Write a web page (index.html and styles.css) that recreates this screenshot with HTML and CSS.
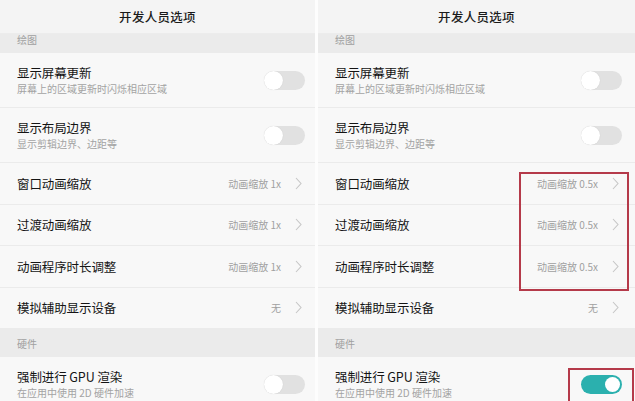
FILE: index.html
```html
<!DOCTYPE html>
<html lang="zh">
<head>
<meta charset="utf-8">
<title>开发人员选项</title>
<link rel="stylesheet" href="styles.css">
</head>
<body>
<div class="screen">
  <section class="panel panel--left">
    <header class="header">开发人员选项</header>
    <div class="section section--top">绘图</div>
    <div class="row row--double">
      <div class="text"><div class="title">显示屏幕更新</div><div class="sub">屏幕上的区域更新时闪烁相应区域</div></div>
      <span class="toggle"><span class="knob"></span></span>
    </div>
    <div class="row row--double">
      <div class="text"><div class="title">显示布局边界</div><div class="sub">显示剪辑边界、边距等</div></div>
      <span class="toggle"><span class="knob"></span></span>
    </div>
    <div class="row">
      <div class="title">窗口动画缩放</div>
      <span class="value">动画缩放 1x</span>
      <svg class="chev" width="7" height="13" viewBox="0 0 7 13"><polyline points="1,1 6,6.5 1,12" fill="none" stroke="#c6c6c6" stroke-width="1.1"/></svg>
    </div>
    <div class="row">
      <div class="title">过渡动画缩放</div>
      <span class="value">动画缩放 1x</span>
      <svg class="chev" width="7" height="13" viewBox="0 0 7 13"><polyline points="1,1 6,6.5 1,12" fill="none" stroke="#c6c6c6" stroke-width="1.1"/></svg>
    </div>
    <div class="row">
      <div class="title">动画程序时长调整</div>
      <span class="value">动画缩放 1x</span>
      <svg class="chev" width="7" height="13" viewBox="0 0 7 13"><polyline points="1,1 6,6.5 1,12" fill="none" stroke="#c6c6c6" stroke-width="1.1"/></svg>
    </div>
    <div class="row">
      <div class="title">模拟辅助显示设备</div>
      <span class="value">无</span>
      <svg class="chev" width="7" height="13" viewBox="0 0 7 13"><polyline points="1,1 6,6.5 1,12" fill="none" stroke="#c6c6c6" stroke-width="1.1"/></svg>
    </div>
    <div class="section">硬件</div>
    <div class="row row--double">
      <div class="text"><div class="title">强制进行 GPU 渲染</div><div class="sub">在应用中使用 2D 硬件加速</div></div>
      <span class="toggle"><span class="knob"></span></span>
    </div>
  </section>
  <div class="divider"></div>
  <section class="panel panel--right">
    <header class="header">开发人员选项</header>
    <div class="section section--top">绘图</div>
    <div class="row row--double">
      <div class="text"><div class="title">显示屏幕更新</div><div class="sub">屏幕上的区域更新时闪烁相应区域</div></div>
      <span class="toggle"><span class="knob"></span></span>
    </div>
    <div class="row row--double">
      <div class="text"><div class="title">显示布局边界</div><div class="sub">显示剪辑边界、边距等</div></div>
      <span class="toggle"><span class="knob"></span></span>
    </div>
    <div class="row">
      <div class="title">窗口动画缩放</div>
      <span class="value">动画缩放 0.5x</span>
      <svg class="chev" width="7" height="13" viewBox="0 0 7 13"><polyline points="1,1 6,6.5 1,12" fill="none" stroke="#c6c6c6" stroke-width="1.1"/></svg>
    </div>
    <div class="row">
      <div class="title">过渡动画缩放</div>
      <span class="value">动画缩放 0.5x</span>
      <svg class="chev" width="7" height="13" viewBox="0 0 7 13"><polyline points="1,1 6,6.5 1,12" fill="none" stroke="#c6c6c6" stroke-width="1.1"/></svg>
    </div>
    <div class="row">
      <div class="title">动画程序时长调整</div>
      <span class="value">动画缩放 0.5x</span>
      <svg class="chev" width="7" height="13" viewBox="0 0 7 13"><polyline points="1,1 6,6.5 1,12" fill="none" stroke="#c6c6c6" stroke-width="1.1"/></svg>
    </div>
    <div class="row">
      <div class="title">模拟辅助显示设备</div>
      <span class="value">无</span>
      <svg class="chev" width="7" height="13" viewBox="0 0 7 13"><polyline points="1,1 6,6.5 1,12" fill="none" stroke="#c6c6c6" stroke-width="1.1"/></svg>
    </div>
    <div class="section">硬件</div>
    <div class="row row--double">
      <div class="text"><div class="title">强制进行 GPU 渲染</div><div class="sub">在应用中使用 2D 硬件加速</div></div>
      <span class="toggle toggle--on"><span class="knob"></span></span>
    </div>
    <div class="mark mark--values"></div>
    <div class="mark mark--toggle"></div>
  </section>
</div>
</body>
</html>
```
FILE: styles.css
```css
* { box-sizing: border-box; }
html, body {
  margin: 0;
  padding: 0;
  width: 635px;
  height: 401px;
  overflow: hidden;
  background: #f7f7f7;
  font-family: "Noto Sans CJK SC", "Noto Sans", sans-serif;
}
.screen {
  display: flex;
  width: 635px;
  height: 401px;
}
.panel {
  display: flex;
  flex-direction: column;
  background: #f8f8f8;
  height: 401px;
  overflow: hidden;
}
.panel--left { width: 315px; }
.panel--right { width: 317px; position: relative; }
.divider {
  width: 3px;
  background: #fdfdfd;
}
.header {
  height: 34px;
  flex: none;
  display: flex;
  align-items: center;
  justify-content: center;
  background: #f4f4f4;
  font-size: 12.5px;
  font-weight: 500;
  color: #1a1a1a;
  letter-spacing: 0.3px;
  border-bottom: 1px solid #ececec;
}
.section {
  flex: none;
  height: 28px;
  display: flex;
  align-items: center;
  padding-left: 17px;
  background: #ebebeb;
  font-size: 10px;
  color: #a0a0a0;
}
.section--top {
  height: 19px;
  align-items: flex-start;
  line-height: 12px;
}
.row {
  flex: none;
  height: 41.5px;
  display: flex;
  align-items: center;
  padding: 0 10px 0 17px;
  border-bottom: 1px solid #ebebeb;
  background: #f8f8f8;
}
.panel--right .row { padding-right: 13px; }
.row--double { height: 55px; }
.text {
  flex: 1;
  display: flex;
  flex-direction: column;
}
.title {
  font-size: 12.5px;
  line-height: 17px;
  color: #141414;
  letter-spacing: -0.1px;
}
.row > .title { flex: 1; }
.sub {
  font-size: 10px;
  line-height: 14px;
  margin-top: 1px;
  color: #a3a3a3;
}
.value {
  font-size: 10px;
  color: #a0a0a0;
  margin-right: 14px;
}
.chev {
  display: block;
  margin-right: 3px;
}
.toggle {
  position: relative;
  width: 41px;
  height: 19px;
  border-radius: 10px;
  background: #e1e1e1;
  flex: none;
}
.toggle .knob {
  position: absolute;
  left: 0;
  top: 0;
  width: 19px;
  height: 19px;
  border-radius: 50%;
  background: #ffffff;
  box-shadow: 0 0 1px rgba(0,0,0,0.15);
}
.toggle--on {
  background: #2bb0ae;
}
.toggle--on .knob {
  left: auto;
  right: 2px;
  top: 2px;
  width: 15px;
  height: 15px;
  box-shadow: none;
}
.mark {
  position: absolute;
  border: 2px solid #b53a4a;
}
.mark--values {
  left: 201px;
  top: 172px;
  width: 110px;
  height: 119px;
}
.mark--toggle {
  left: 250px;
  top: 368px;
  width: 66px;
  height: 40px;
}
```
